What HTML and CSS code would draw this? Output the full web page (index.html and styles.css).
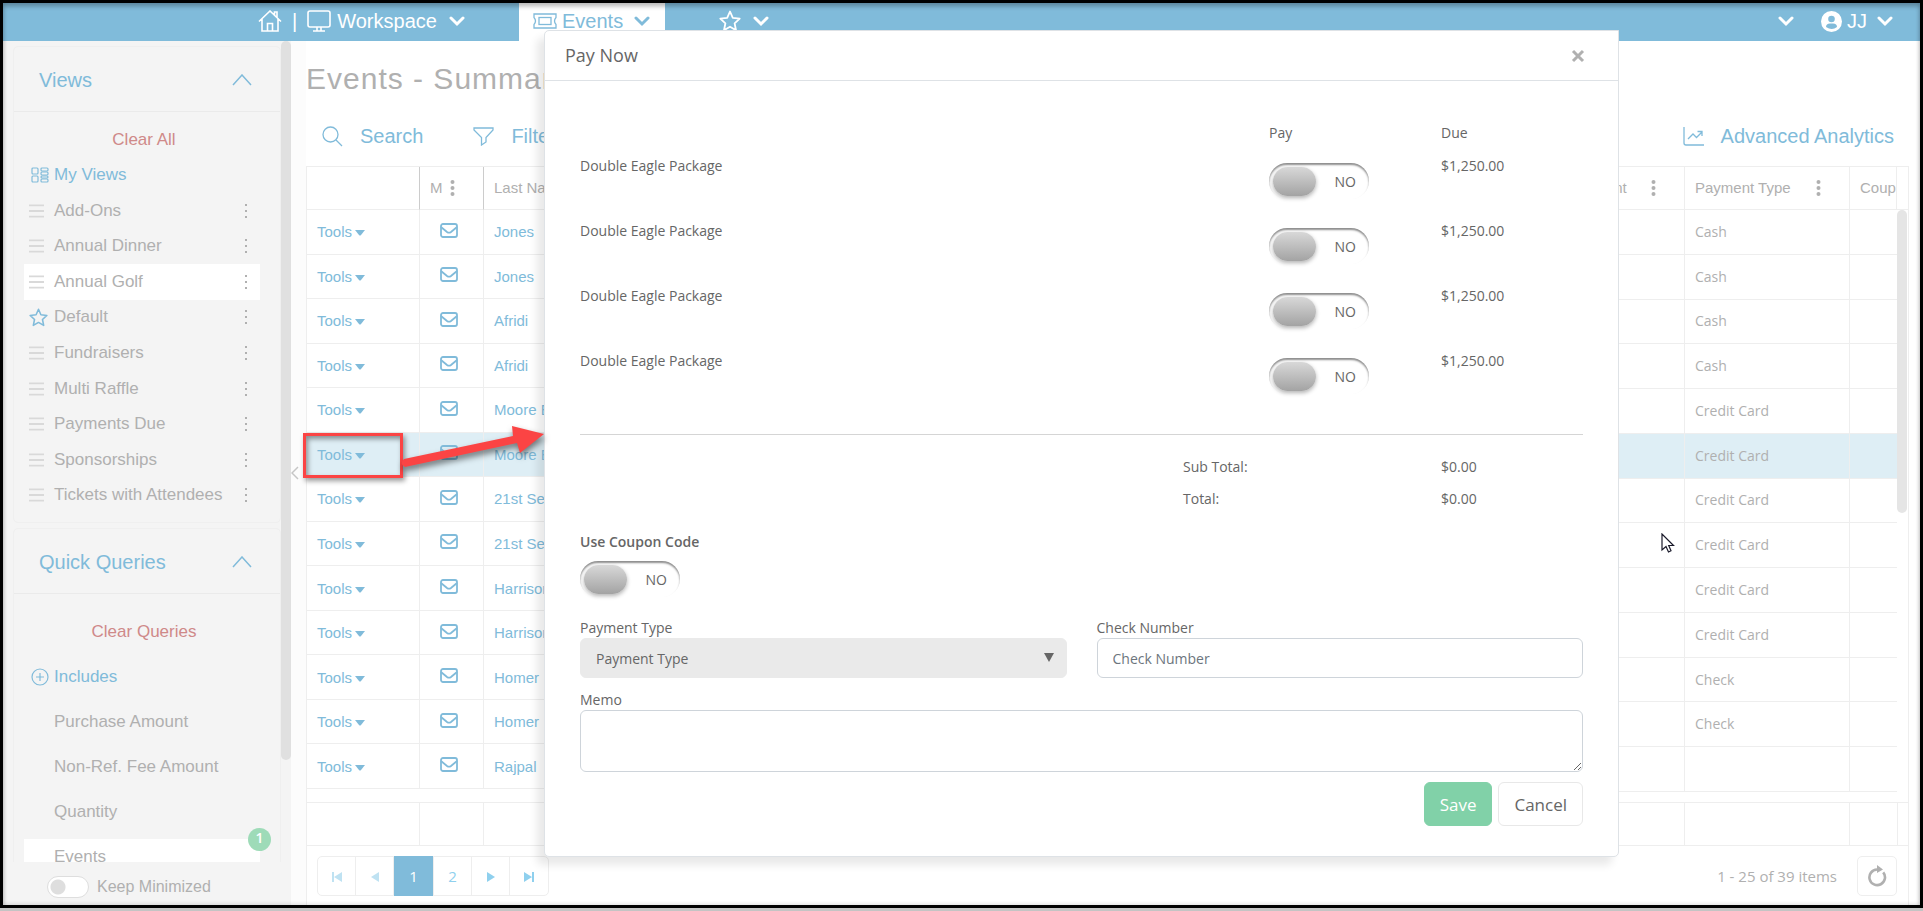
FILE: index.html
```html
<!DOCTYPE html>
<html lang="en">
<head>
    <meta charset="UTF-8">
    <meta name="viewport" content="width=device-width, initial-scale=1.0">
    <title>Events - Summary</title>
    <link rel="stylesheet" href="styles.css">
</head>
<body>
<!-- Icons -->
<svg class="sprite" aria-hidden="true">
    <symbol id="chevron" viewBox="0 0 16 11"><path d="M2 2l6 6 6-6" fill="none" stroke="currentColor" stroke-width="3" stroke-linecap="round"/></symbol>
    <symbol id="up" viewBox="0 0 20 12"><path d="M1 11L10 1l9 10" fill="none" stroke="currentColor" stroke-width="1.5"/></symbol>
    <symbol id="mail" viewBox="0 0 18 15"><rect x="1" y="1" width="16" height="13" rx="2" fill="none" stroke="currentColor" stroke-width="1.8"/><path d="M1 4l6 5q2 1.400 4 0l6-5" fill="none" stroke="currentColor" stroke-width="1.8"/></symbol>
    <symbol id="dots" viewBox="0 0 5 18"><g fill="currentColor"><circle cx="2.500" cy="3" r="2"/><circle cx="2.500" cy="9" r="2"/><circle cx="2.500" cy="15" r="2"/></g></symbol>
    <symbol id="smalldots" viewBox="0 0 4 16"><path d="M1 1h2v2H1zM1 7h2v2H1zM1 13h2v2H1z" fill="currentColor"/></symbol>
    <symbol id="bars" viewBox="0 0 16 14"><path d="M0 1h16M0 7h16M0 13h16" stroke="#d9d9d9" stroke-width="2"/></symbol>
    <symbol id="star" viewBox="0 0 22 22"><path d="M11 1.500l2.800 6.300 6.900.8-5.100 4.700 1.400 6.900-6-3.500-6 3.500 1.400-6.900L1.300 8.600l6.900-.8z" fill="none" stroke="currentColor" stroke-width="1.800" stroke-linejoin="round"/></symbol>
    <symbol id="caret" viewBox="0 0 10 7"><path d="M0 1h10L6 6q-1 1-2 0z" fill="currentColor"/></symbol>
</svg>

<div class="frame">
    <header class="topbar">
        <nav class="nav-left">
            <a href="#" class="home" aria-label="Home">
                <svg width="24" height="22" viewBox="0 0 24 22" fill="none" stroke="currentColor" stroke-width="1.600"><path d="M1 11.500L12 1l11 10.500M4 9v12h16V9M16.500 5V2H19v5.500M9.500 21v-7.500h5V21"/></svg>
            </a>
            <span class="divider">|</span>
            <a href="#" class="workspace">
                <svg width="24" height="22" viewBox="0 0 24 22" fill="none" stroke="currentColor" stroke-width="1.600"><rect x="1" y="1" width="22" height="16" rx="2"/><path d="M10 17v3.500M14 17v3.500M6 21h12"/></svg>
                Workspace
            </a>
            <svg class="chev" width="16" height="11"><use href="#chevron"/></svg>
        </nav>
        <a href="#" class="tab">
            <svg width="24" height="16" viewBox="0 0 24 16" fill="none" stroke="currentColor" stroke-width="1.300"><path d="M1 1h22v3.500q-3 3.500 0 7V15H1v-3.500q3-3.500 0-7z"/><rect x="6" y="4.500" width="12" height="7"/></svg>
            <span>Events</span>
            <svg class="chev" width="16" height="11"><use href="#chevron"/></svg>
        </a>
        <a href="#" class="favs" aria-label="Favorites">
            <svg width="22" height="22"><use href="#star"/></svg>
            <svg width="16" height="11"><use href="#chevron"/></svg>
        </a>
        <a href="#" class="more" aria-label="More"><svg width="16" height="11"><use href="#chevron"/></svg></a>
        <a href="#" class="user">
            <svg width="21" height="21" viewBox="0 0 21 21"><circle cx="10.500" cy="10.500" r="10.500" fill="#fff"/><circle cx="10.500" cy="8" r="3.300" fill="#80bbda"/><path d="M5 16q0-3.500 4-3.500h3q4 0 4 3.500-5 4-11 0z" fill="#80bbda"/></svg>
            <span>JJ</span>
            <svg width="16" height="11"><use href="#chevron"/></svg>
        </a>
    </header>

    <div class="page">
        <aside class="sidebar">
            <div class="scroller">
                <section class="panel">
                    <h2>Views <svg width="20" height="12"><use href="#up"/></svg></h2>
                    <a href="#" class="clear">Clear All</a>
                    <div class="group">
                        <svg width="18" height="16" viewBox="0 0 18 16" fill="none" stroke="currentColor" stroke-width="1.200"><rect x="1" y="1" width="6" height="6" rx="1"/><rect x="1" y="9" width="6" height="6" rx="1"/><rect x="10" y="1" width="7" height="3" rx="1"/><rect x="10" y="5" width="7" height="3" rx="1"/><rect x="10" y="9" width="7" height="2" rx="1"/><rect x="10" y="12" width="7" height="3" rx="1"/></svg>
                        My Views
                    </div>
                    <ul class="views">
                        <li><svg width="15" height="14"><use href="#bars"/></svg><a href="#">Add-Ons</a><svg class="kebab" width="4" height="16"><use href="#smalldots"/></svg></li>
                        <li><svg width="15" height="14"><use href="#bars"/></svg><a href="#">Annual Dinner</a><svg class="kebab" width="4" height="16"><use href="#smalldots"/></svg></li>
                        <li class="current"><svg width="15" height="14"><use href="#bars"/></svg><a href="#">Annual Golf</a><svg class="kebab" width="4" height="16"><use href="#smalldots"/></svg></li>
                        <li><svg class="star" width="19" height="19"><use href="#star"/></svg><a href="#">Default</a><svg class="kebab" width="4" height="16"><use href="#smalldots"/></svg></li>
                        <li><svg width="15" height="14"><use href="#bars"/></svg><a href="#">Fundraisers</a><svg class="kebab" width="4" height="16"><use href="#smalldots"/></svg></li>
                        <li><svg width="15" height="14"><use href="#bars"/></svg><a href="#">Multi Raffle</a><svg class="kebab" width="4" height="16"><use href="#smalldots"/></svg></li>
                        <li><svg width="15" height="14"><use href="#bars"/></svg><a href="#">Payments Due</a><svg class="kebab" width="4" height="16"><use href="#smalldots"/></svg></li>
                        <li><svg width="15" height="14"><use href="#bars"/></svg><a href="#">Sponsorships</a><svg class="kebab" width="4" height="16"><use href="#smalldots"/></svg></li>
                        <li><svg width="15" height="14"><use href="#bars"/></svg><a href="#">Tickets with Attendees</a><svg class="kebab" width="4" height="16"><use href="#smalldots"/></svg></li>
                    </ul>
                </section>
                <section class="panel queries-panel">
                    <h2>Quick Queries <svg width="20" height="12"><use href="#up"/></svg></h2>
                    <a href="#" class="clear">Clear Queries</a>
                    <div class="group">
                        <svg width="18" height="18" viewBox="0 0 18 18" fill="none" stroke="currentColor" stroke-width="1.200"><circle cx="9" cy="9" r="8"/><path d="M9 5v8M5 9h8"/></svg>
                        Includes
                    </div>
                    <ul class="queries">
                        <li><a href="#">Purchase Amount</a></li>
                        <li><a href="#">Non-Ref. Fee Amount</a></li>
                        <li><a href="#">Quantity</a></li>
                        <li class="current"><a href="#">Events</a><span class="badge">1</span></li>
                    </ul>
                </section>
                <div class="scrollbar"></div>
            </div>
            <div class="minimize">
                <input type="checkbox" id="keepMin">
                <label for="keepMin">Keep Minimized</label>
            </div>
        </aside>

        <div class="splitter">
            <svg width="8" height="14" viewBox="0 0 8 14"><path d="M7 1L1 7l6 6" fill="none" stroke="#c6c6c6" stroke-width="1.500"/></svg>
        </div>

        <main>
            <h1>Events - Summary</h1>
            <div class="toolbar">
                <a href="#"><svg width="21" height="21" viewBox="0 0 21 21" fill="none" stroke="currentColor" stroke-width="1.300"><circle cx="8.500" cy="8.500" r="7.500"/><path d="M14 14l6 6"/></svg>Search</a>
                <a href="#"><svg width="21" height="19" viewBox="0 0 21 19" fill="none" stroke="currentColor" stroke-width="1.300"><path d="M1 1h19v2l-7 7.500V15l-4.500 3v-7.500L1 3z"/></svg>Filters</a>
                <a href="#" class="analytics"><svg width="21" height="19" viewBox="0 0 21 19" fill="none" stroke="currentColor" stroke-width="1.300"><path d="M1 0v16q0 2 2 2h18M5 12l5-5 3.500 3.500L19 5M14.500 4.500H19V9"/></svg>Advanced Analytics</a>
            </div>

            <div class="grid">
                <div class="grid-body">
                    <table class="locked">
                        <thead>
                        <tr>
                            <th class="col-tools"></th>
                            <th class="col-mail"><span class="head">M <svg width="5" height="18"><use href="#dots"/></svg></span></th>
                            <th>Last Name</th>
                        </tr>
                        </thead>
                        <tbody>
                        <tr><td><a href="#">Tools <svg width="10" height="7"><use href="#caret"/></svg></a></td><td class="mail"><svg width="18" height="15"><use href="#mail"/></svg></td><td><a href="#">Jones</a></td></tr>
                        <tr><td><a href="#">Tools <svg width="10" height="7"><use href="#caret"/></svg></a></td><td class="mail"><svg width="18" height="15"><use href="#mail"/></svg></td><td><a href="#">Jones</a></td></tr>
                        <tr><td><a href="#">Tools <svg width="10" height="7"><use href="#caret"/></svg></a></td><td class="mail"><svg width="18" height="15"><use href="#mail"/></svg></td><td><a href="#">Afridi</a></td></tr>
                        <tr><td><a href="#">Tools <svg width="10" height="7"><use href="#caret"/></svg></a></td><td class="mail"><svg width="18" height="15"><use href="#mail"/></svg></td><td><a href="#">Afridi</a></td></tr>
                        <tr><td><a href="#">Tools <svg width="10" height="7"><use href="#caret"/></svg></a></td><td class="mail"><svg width="18" height="15"><use href="#mail"/></svg></td><td><a href="#">Moore E</a></td></tr>
                        <tr class="selected"><td><a href="#">Tools <svg width="10" height="7"><use href="#caret"/></svg></a></td><td class="mail"><svg width="18" height="15"><use href="#mail"/></svg></td><td><a href="#">Moore E</a></td></tr>
                        <tr><td><a href="#">Tools <svg width="10" height="7"><use href="#caret"/></svg></a></td><td class="mail"><svg width="18" height="15"><use href="#mail"/></svg></td><td><a href="#">21st Se</a></td></tr>
                        <tr><td><a href="#">Tools <svg width="10" height="7"><use href="#caret"/></svg></a></td><td class="mail"><svg width="18" height="15"><use href="#mail"/></svg></td><td><a href="#">21st Se</a></td></tr>
                        <tr><td><a href="#">Tools <svg width="10" height="7"><use href="#caret"/></svg></a></td><td class="mail"><svg width="18" height="15"><use href="#mail"/></svg></td><td><a href="#">Harrison</a></td></tr>
                        <tr><td><a href="#">Tools <svg width="10" height="7"><use href="#caret"/></svg></a></td><td class="mail"><svg width="18" height="15"><use href="#mail"/></svg></td><td><a href="#">Harrison</a></td></tr>
                        <tr><td><a href="#">Tools <svg width="10" height="7"><use href="#caret"/></svg></a></td><td class="mail"><svg width="18" height="15"><use href="#mail"/></svg></td><td><a href="#">Homer</a></td></tr>
                        <tr><td><a href="#">Tools <svg width="10" height="7"><use href="#caret"/></svg></a></td><td class="mail"><svg width="18" height="15"><use href="#mail"/></svg></td><td><a href="#">Homer</a></td></tr>
                        <tr><td><a href="#">Tools <svg width="10" height="7"><use href="#caret"/></svg></a></td><td class="mail"><svg width="18" height="15"><use href="#mail"/></svg></td><td><a href="#">Rajpal</a></td></tr>
                        </tbody>
                    </table>
                    <table class="content">
                        <thead>
                        <tr>
                            <th></th>
                            <th class="col-amount"><span class="head">Amount <svg width="5" height="18"><use href="#dots"/></svg></span></th>
                            <th class="col-type"><span class="head">Payment Type <svg width="5" height="18"><use href="#dots"/></svg></span></th>
                            <th class="col-coupon">Coup</th>
                        </tr>
                        </thead>
                        <tbody>
                        <tr><td></td><td></td><td>Cash</td><td></td></tr>
                        <tr><td></td><td></td><td>Cash</td><td></td></tr>
                        <tr><td></td><td></td><td>Cash</td><td></td></tr>
                        <tr><td></td><td></td><td>Cash</td><td></td></tr>
                        <tr><td></td><td></td><td>Credit Card</td><td></td></tr>
                        <tr class="selected"><td></td><td></td><td>Credit Card</td><td></td></tr>
                        <tr><td></td><td></td><td>Credit Card</td><td></td></tr>
                        <tr><td></td><td></td><td>Credit Card</td><td></td></tr>
                        <tr><td></td><td></td><td>Credit Card</td><td></td></tr>
                        <tr><td></td><td></td><td>Credit Card</td><td></td></tr>
                        <tr><td></td><td></td><td>Check</td><td></td></tr>
                        <tr><td></td><td></td><td>Check</td><td></td></tr>
                        <tr><td></td><td></td><td></td><td></td></tr>
                        </tbody>
                    </table>
                    <div class="grid-scroll"><div class="thumb"></div></div>
                </div>
                <div class="grid-footer"><div></div><div></div><div></div><div></div><div></div><div></div></div>
                <div class="pager">
                    <div class="pages">
                        <button class="off" aria-label="First"><svg width="10" height="10" viewBox="0 0 10 10"><path d="M0 0h2v10H0zM10 0v10L2 5z" fill="currentColor"/></svg></button>
                        <button class="off" aria-label="Previous"><svg width="8" height="10" viewBox="0 0 8 10"><path d="M8 0v10L0 5z" fill="currentColor"/></svg></button>
                        <button class="active">1</button>
                        <button>2</button>
                        <button aria-label="Next"><svg width="8" height="10" viewBox="0 0 8 10"><path d="M0 0v10l8-5z" fill="currentColor"/></svg></button>
                        <button aria-label="Last"><svg width="10" height="10" viewBox="0 0 10 10"><path d="M8 0h2v10H8zM0 0v10l8-5z" fill="currentColor"/></svg></button>
                    </div>
                    <span class="info">1 - 25 of 39 items</span>
                    <button class="refresh" aria-label="Refresh"><svg width="20" height="22" viewBox="0 0 20 22"><path d="M11 4.500H10A7.800 7.800 0 1 0 16.200 7.300" fill="none" stroke="currentColor" stroke-width="2.600"/><path d="M10 0l6 4.500-6 3.500z" fill="currentColor"/></svg></button>
                </div>
            </div>
        </main>
    </div>

    <!-- Modal -->
    <div class="modal" role="dialog" aria-labelledby="modalTitle">
        <div class="modal-header">
            <h3 id="modalTitle">Pay Now</h3>
            <button class="close" aria-label="Close"><svg width="14" height="14" viewBox="0 0 14 14"><path d="M2 2l10 10M12 2L2 12" stroke="#b0b0b0" stroke-width="3"/></svg></button>
        </div>
        <form class="modal-body">
            <table class="items">
                <thead>
                <tr><th></th><th class="col-pay">Pay</th><th class="col-due">Due</th></tr>
                </thead>
                <tbody>
                <tr><td>Double Eagle Package</td><td><label class="switch"><input type="checkbox"><span>NO</span></label></td><td>$1,250.00</td></tr>
                <tr><td>Double Eagle Package</td><td><label class="switch"><input type="checkbox"><span>NO</span></label></td><td>$1,250.00</td></tr>
                <tr><td>Double Eagle Package</td><td><label class="switch"><input type="checkbox"><span>NO</span></label></td><td>$1,250.00</td></tr>
                <tr><td>Double Eagle Package</td><td><label class="switch"><input type="checkbox"><span>NO</span></label></td><td>$1,250.00</td></tr>
                </tbody>
            </table>
            <hr>
            <dl class="totals">
                <dt>Sub Total:</dt><dd>$0.00</dd>
                <dt>Total:</dt><dd>$0.00</dd>
            </dl>
            <div class="coupon">
                <label for="coupon" class="strong">Use Coupon Code</label>
                <label class="switch"><input type="checkbox" id="coupon"><span>NO</span></label>
            </div>
            <div class="fields">
                <div class="field">
                    <label for="payType">Payment Type</label>
                    <div class="select-wrap">
                        <select id="payType"><option>Payment Type</option></select>
                        <svg width="10" height="9" viewBox="0 0 10 9"><path d="M0 0h10L5 9z" fill="#666"/></svg>
                    </div>
                </div>
                <div class="field">
                    <label for="checkNo">Check Number</label>
                    <input type="text" id="checkNo" placeholder="Check Number">
                </div>
            </div>
            <div class="field">
                <label for="memo">Memo</label>
                <textarea id="memo"></textarea>
            </div>
            <div class="buttons">
                <button type="button" class="save">Save</button>
                <button type="button" class="cancel">Cancel</button>
            </div>
        </form>
    </div>

    <!-- Callout on the Tools menu -->
    <div class="callout"></div>
    <svg class="arrow" width="150" height="50" viewBox="0 0 150 50"><path d="M5 38q-5 5 1 8l112-24 3 10 24-19-32-8 1 10z" fill="#fb4444"/></svg>
    <svg class="cursor" width="14" height="21" viewBox="0 0 14 21"><path d="M1 1v16l4-3.500 2.500 5.500 2.500-1.200-2.300-5.300H12.500z" fill="#fff" stroke="#1a1a2a" stroke-width="1.200"/></svg>
</div>
</body>
</html>
```

FILE: styles.css
```css
* {
    box-sizing: border-box;
}

body {
    font-family: "Liberation Sans", Arial, sans-serif;
    font-size: 15px;
    color: #b0b0b0;
    background-color: #c4c4c4;
    margin: 0;
}

a {
    color: inherit;
    text-decoration: none;
}

h1, h2, h3, ul, dl, dd {
    margin: 0;
    padding: 0;
    font-weight: normal;
}

ul {
    list-style: none;
}

button, input, select, textarea {
    font-family: inherit;
    color: inherit;
    margin: 0;
}

svg {
    flex: none;
}

.sprite {
    display: none;
}

.frame {
    position: relative;
    display: flex;
    flex-direction: column;
    height: calc(100vh - 3px);
    border: 3px solid #000;
    background-color: #fff;
    overflow: hidden;
}

.frame::after {
    content: "";
    position: absolute;
    inset: 0;
    pointer-events: none;
    box-shadow: inset 0 4px 4px rgba(0, 0, 0, 0.2), inset 0 0 5px rgba(0, 0, 0, 0.2);
}

/* Top bar */
.topbar {
    display: flex;
    flex: none;
    height: 38px;
    background-color: #80bbda;
    color: #fff;
    font-size: 20px;
}

.topbar a {
    display: flex;
    align-items: center;
}

.nav-left {
    display: flex;
    align-items: center;
    width: 516px;
    padding: 3px 0 5px 255px;
}

.divider {
    margin: 0 10px;
}

.workspace {
    gap: 6px;
}

.nav-left .chev {
    margin-left: 12px;
}

.topbar .tab {
    width: 146px;
    padding: 3px 0 5px 14px;
    background-color: #fff;
    color: #80bbda;
    gap: 5px;
}

.tab .chev {
    margin-left: 6px;
}

.favs {
    gap: 12px;
    margin-left: 54px;
    padding: 3px 0 5px;
}

.more {
    margin-left: auto;
    padding: 3px 0 5px;
}

.user {
    gap: 5px;
    margin: 0 27px;
    padding: 3px 0 5px;
}

.user span {
    margin-right: 5px;
}

/* Sidebar */
.page {
    display: flex;
    flex: 1;
    min-height: 0;
}

.sidebar {
    display: flex;
    flex-direction: column;
    width: 288px;
    background-color: #f4f4f4;
    font-size: 17px;
}

.scroller {
    position: relative;
    flex: 1;
    min-height: 0;
    overflow: hidden;
    padding: 5px 10px 0;
}

.scrollbar {
    position: absolute;
    top: 0;
    right: 0;
    width: 10px;
    height: 719px;
    border-radius: 5px;
    background-color: #e0e0e0;
}

.panel {
    border: 1px solid #efefef;
    border-radius: 5px;
    padding-bottom: 9px;
    margin-bottom: 5px;
}

.panel h2 {
    display: flex;
    align-items: center;
    justify-content: space-between;
    height: 65px;
    padding: 2px 28px 0 25px;
    border-bottom: 1px solid #eaeaea;
    font-size: 20px;
    color: #80bbda;
}

.clear {
    display: block;
    padding: 10px 6px 0 0;
    line-height: 35px;
    text-align: center;
    color: #cf8989;
}

.group {
    display: flex;
    align-items: center;
    gap: 5px;
    height: 36px;
    padding-left: 17px;
    color: #80bbda;
}

.views {
    display: flex;
    flex-direction: column;
    height: 320px;
    margin: 0 20px 0 10px;
}

.views li {
    display: flex;
    flex: 1;
    align-items: center;
    gap: 10px;
    padding: 0 12px 0 5px;
}

.views .star {
    margin-right: -4px;
    color: #80bbda;
}

.views .kebab {
    margin-left: auto;
}

.current {
    background-color: #fff;
}

.queries-panel .clear {
    padding-top: 20px;
}

.queries-panel .group {
    margin: 10px 0 9px;
}

.queries {
    margin: 0 20px 0 10px;
}

.queries li {
    position: relative;
    height: 36px;
    margin-bottom: 9px;
    padding-left: 30px;
    line-height: 36px;
}

.badge {
    position: absolute;
    top: -11px;
    right: -11px;
    width: 23px;
    height: 23px;
    border-radius: 50%;
    background-color: #9edbb8;
    color: #fff;
    font-family: "Open Sans", sans-serif;
    font-size: 14px;
    font-weight: 600;
    line-height: 20px;
    text-align: center;
}

.minimize {
    display: flex;
    align-items: center;
    gap: 8px;
    height: 43px;
    padding: 6px 0 0 44px;
    font-size: 16px;
}

.minimize input {
    appearance: none;
    width: 42px;
    height: 22px;
    border: 1px solid #dedede;
    border-radius: 11px;
    background: radial-gradient(circle at 10px 10px, #dedede 7px, #fff 8px);
}

.splitter {
    display: flex;
    align-items: center;
    width: 15px;
    background-color: #fcfcfc;
}

/* Main area */
main {
    display: flex;
    flex: 1;
    flex-direction: column;
    min-width: 0;
    padding-right: 11px;
}

h1 {
    height: 75px;
    font-size: 30px;
    letter-spacing: 1px;
    line-height: 75px;
}

.toolbar {
    display: flex;
    align-items: center;
    gap: 50px;
    height: 50px;
    padding: 0 15px 9px 16px;
    font-size: 20px;
    color: #80bbda;
}

.toolbar a {
    display: flex;
    align-items: center;
    gap: 17px;
}

.toolbar .analytics {
    margin-left: auto;
}

.grid {
    display: flex;
    flex: 1;
    flex-direction: column;
    border: 1px solid #eee;
    border-bottom: none;
}

.grid-body {
    display: flex;
    align-items: flex-start;
    height: 636px;
    border-bottom: 1px solid #eee;
}

.grid table {
    border-collapse: separate;
    border-spacing: 0;
    table-layout: fixed;
}

.grid th {
    height: 43px;
    padding: 0 10px 1px;
    border-right: 1px solid #eee;
    border-bottom: 1px solid #eee;
    font-weight: normal;
    text-align: left;
    white-space: nowrap;
    overflow: hidden;
}

.grid td {
    height: 44px;
    padding: 0 10px;
    border-right: 1px solid #eee;
    border-bottom: 1px solid #eee;
}

.grid td a svg {
    vertical-align: 1px;
    margin-left: -1px;
}

.locked {
    width: 360px;
    height: 622px;
    color: #80bbda;
}

.locked th {
    border-right-color: #ccc;
    color: #b0b0b0;
}

.col-tools {
    width: 113px;
}

.col-mail {
    width: 64px;
}

.locked .mail {
    padding: 0 6px 0 0;
    text-align: center;
}

.head {
    display: flex;
    align-items: center;
    justify-content: space-between;
    padding-right: 18px;
}

.content {
    flex: 1;
    min-width: 0;
    height: 625px;
}

.content td {
    padding-bottom: 1px;
    font-family: "Open Sans", sans-serif;
    font-size: 14px;
}

.content td:last-child {
    border-right: none;
}

.col-amount {
    width: 120px;
}

.col-type {
    width: 165px;
}

.content .col-coupon {
    width: 47px;
    padding-right: 0;
}

.selected td {
    background-color: #deeef5;
}

.grid-scroll {
    width: 11px;
    padding-top: 42px;
    align-self: stretch;
}

.grid-scroll::before {
    content: "";
    display: block;
    border-top: 1px solid #eee;
}

.thumb {
    width: 10px;
    height: 303px;
    border-radius: 5px;
    background-color: #e5e5e5;
}

.grid-footer {
    display: grid;
    grid-template-columns: 113px 64px 1fr 165px 48px 10px;
    height: 43px;
    border-bottom: 1px solid #eee;
}

.grid-footer div {
    border-right: 1px solid #eee;
}

.grid-footer div:last-child {
    border-right: none;
}

.pager {
    display: flex;
    align-items: center;
    flex: 1;
    padding: 0 11px 0 10px;
    font-family: "Open Sans", sans-serif;
}

.pages {
    display: flex;
    height: 40px;
    border: 1px solid #eee;
    border-radius: 5px;
}

.pages button {
    width: 38px;
    margin: -1px 0;
    padding: 0;
    border: none;
    border-right: 1px solid #eee;
    background: none;
    color: #8fd0ee;
    font-size: 15px;
}

.pages button:last-child {
    border-right: none;
}

.pages .off {
    color: #bfe2f2;
}

.pages .active {
    width: 40px;
    background-color: #80bbda;
    color: #fff;
}

.info {
    margin: 0 20px 0 auto;
}

.refresh {
    display: flex;
    align-items: center;
    justify-content: center;
    width: 40px;
    height: 40px;
    border: 1px solid #eee;
    border-radius: 5px;
    background-color: #fff;
}

/* Modal */
.modal {
    position: absolute;
    top: 27px;
    left: 541px;
    right: 301px;
    border: 1px solid #dee2e6;
    border-radius: 5px 0 5px 5px;
    background-color: #fff;
    box-shadow: -7px 8px 8px rgba(0, 0, 0, 0.09);
    color: #666;
    font-family: "Open Sans", sans-serif;
    font-size: 14px;
    line-height: 21px;
}

.modal-header {
    display: flex;
    align-items: center;
    justify-content: space-between;
    height: 50px;
    padding: 0 31px 0 20px;
    border-bottom: 1px solid #dee2e6;
}

.modal-header h3 {
    font-size: 18px;
}

.close {
    display: flex;
    padding: 2px;
    border: none;
    background: none;
}

.modal-body {
    padding: 41px 35px 30px;
}

.items {
    width: calc(100% + 30px);
    border-spacing: 0;
    table-layout: fixed;
}

.items th {
    height: 33px;
    padding: 0;
    font-weight: normal;
    text-align: left;
    vertical-align: top;
}

.items td {
    height: 65px;
    padding: 0;
    vertical-align: top;
}

.items .switch {
    margin-top: 8px;
}

.col-pay, .col-due {
    width: 172px;
}

.switch {
    display: flex;
    align-items: center;
    justify-content: space-between;
    width: 100px;
    height: 36px;
    padding: 0 13px 0 4px;
    border-radius: 18px;
    box-shadow: inset 0 2px 2px rgba(0, 0, 0, 0.45);
}

.switch input {
    appearance: none;
    width: 43px;
    height: 29px;
    border-radius: 15px;
    background: linear-gradient(#d8d8d8, #a3a3a3);
    box-shadow: 0 2px 4px rgba(0, 0, 0, 0.3);
}

hr {
    margin: 19px 0 0;
    border: none;
    border-top: 1px solid #d5d5d5;
}

.totals {
    display: grid;
    grid-template-columns: 258px 142px;
    justify-content: end;
    row-gap: 11px;
    margin: 21px 0 22px;
}

.strong {
    display: block;
    margin-bottom: 9px;
    font-weight: 600;
}

.fields {
    display: grid;
    grid-template-columns: 1fr 1fr;
    gap: 30px;
    margin: 20px 0 11px;
}

.field label {
    display: block;
}

.field input, .field select, .field textarea {
    display: block;
    width: 100%;
    height: 40px;
    padding: 0 15px;
    border: 1px solid #ced4da;
    border-radius: 6px;
    background-color: #fff;
    font-size: 14px;
}

.field select {
    appearance: none;
    border-color: #eaeaea;
    background-color: #eaeaea;
}

.field input::placeholder {
    color: #6c757d;
}

.field textarea {
    height: 62px;
}

.select-wrap {
    position: relative;
}

.select-wrap svg {
    position: absolute;
    top: 15px;
    right: 13px;
    pointer-events: none;
}

.buttons {
    display: flex;
    justify-content: flex-end;
    gap: 6px;
    margin-top: 10px;
}

.buttons button {
    height: 44px;
    padding: 0 15px;
    border: 1px solid #e8e8e8;
    border-radius: 6px;
    background-color: #fff;
    font-size: 17px;
}

.buttons .save {
    border-color: #81d1a8;
    background-color: #81d1a8;
    color: #fff;
}

/* Callout */
.callout {
    position: absolute;
    top: 430px;
    left: 300px;
    width: 100px;
    height: 45px;
    border: 3px solid #fb4444;
    box-shadow: 2px 3px 5px rgba(0, 0, 0, 0.4), inset 2px 3px 5px rgba(0, 0, 0, 0.4);
}

.arrow {
    position: absolute;
    top: 418px;
    left: 396px;
    filter: drop-shadow(1px 4px 3px rgba(0, 0, 0, 0.5));
}

.cursor {
    position: absolute;
    top: 530px;
    left: 1658px;
}
```
